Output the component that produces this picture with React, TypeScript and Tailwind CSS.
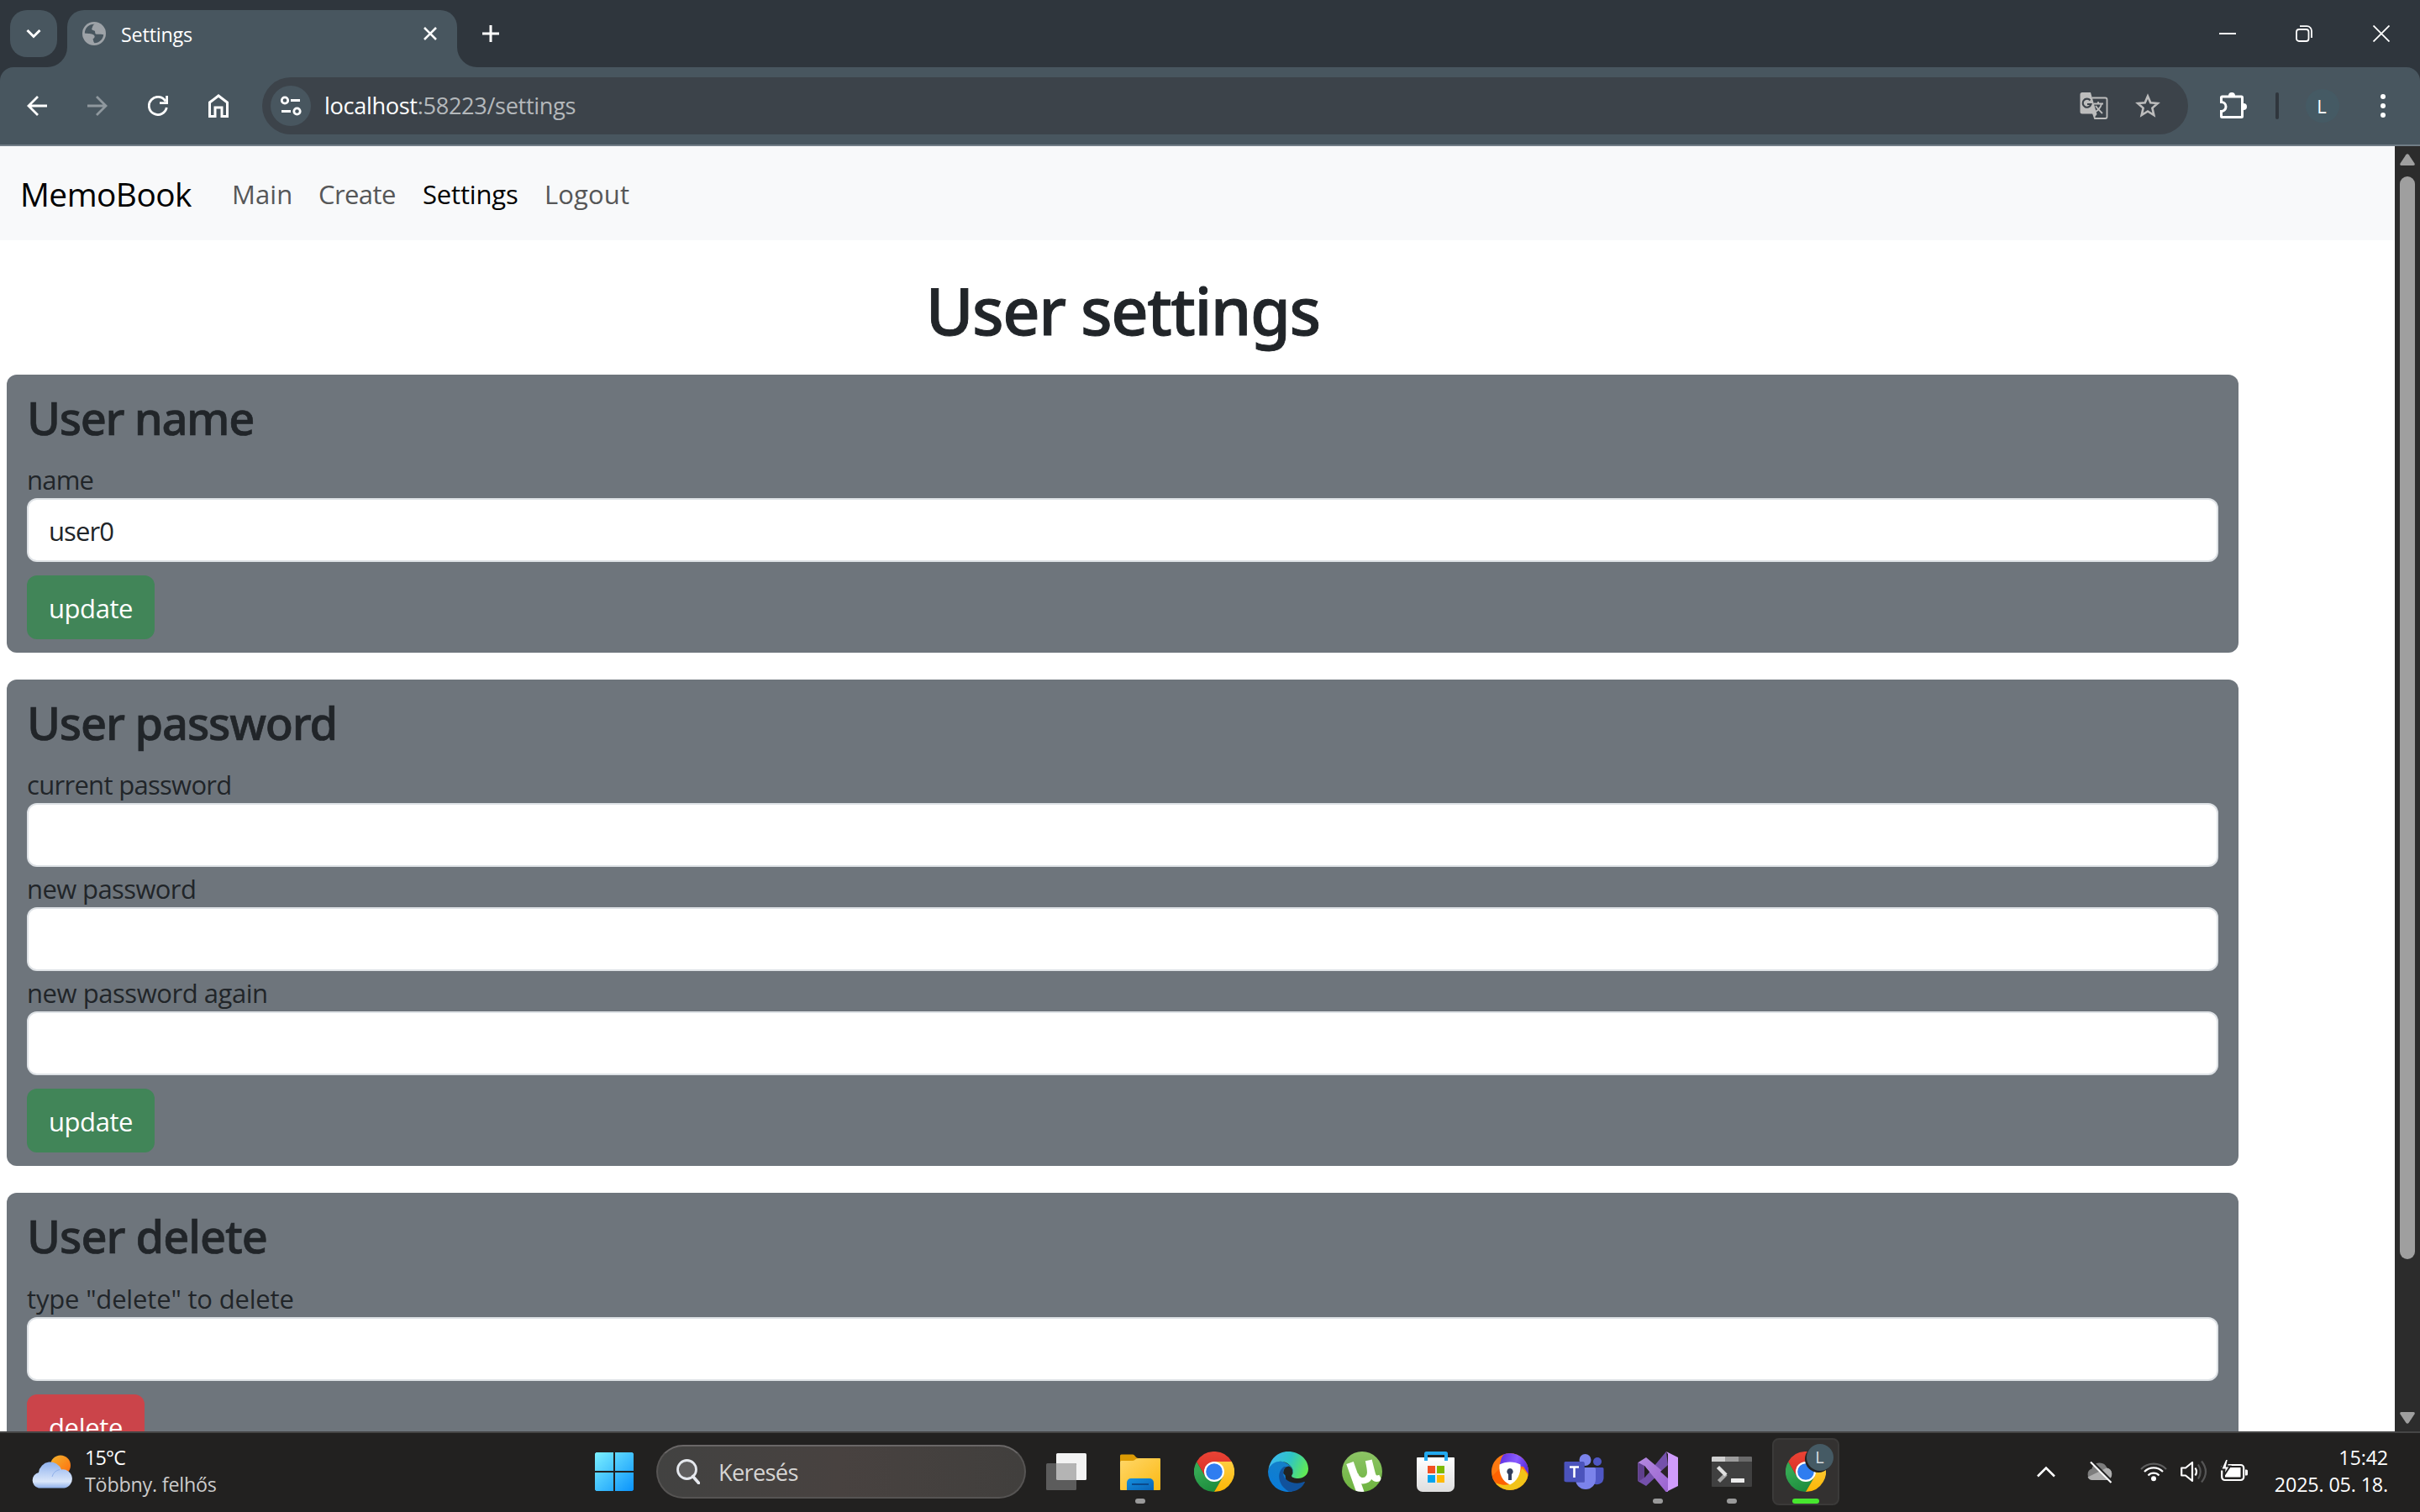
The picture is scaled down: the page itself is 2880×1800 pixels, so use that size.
import React from 'react';

function ChromeLogo() {
  return (
    <svg width="48" height="48" viewBox="0 0 48 48">
      <defs>
        <linearGradient id="cg" x1="0" y1="0" x2="0.5" y2="1">
          <stop offset="0.3" stopColor="#34a853" />
          <stop offset="1" stopColor="#1e8e3e" />
        </linearGradient>
        <linearGradient id="cr" x1="0" y1="0" x2="0" y2="1">
          <stop offset="0" stopColor="#ea4335" />
          <stop offset="1" stopColor="#d93025" />
        </linearGradient>
        <linearGradient id="cy" x1="0.5" y1="0" x2="0.5" y2="1">
          <stop offset="0" stopColor="#ffcd40" />
          <stop offset="1" stopColor="#fbb704" />
        </linearGradient>
      </defs>
      <path d="M24 48A24 24 0 0 1 3.2 12L13.6 30H34.4Z" fill="url(#cg)" />
      <path d="M44.8 12A24 24 0 0 1 24 48L34.4 30L24 12Z" fill="url(#cy)" />
      <path d="M3.2 12A24 24 0 0 1 44.8 12H24L13.6 30Z" fill="url(#cr)" />
      <circle cx="24" cy="24" r="12" fill="#fff" />
      <circle cx="24" cy="24" r="9.8" fill="#2f7df0" />
    </svg>
  );
}

function EdgeLogo() {
  return (
    <svg width="48" height="48" viewBox="0 0 48 48">
      <defs>
        <linearGradient id="e1" x1="0" y1="0.3" x2="1" y2="0.6">
          <stop offset="0" stopColor="#3cb8f5" />
          <stop offset="0.5" stopColor="#2fc5c4" />
          <stop offset="1" stopColor="#62ea52" />
        </linearGradient>
        <linearGradient id="e2" x1="0.6" y1="0" x2="0.2" y2="1">
          <stop offset="0" stopColor="#1580c8" />
          <stop offset="1" stopColor="#087bdc" />
        </linearGradient>
      </defs>
      <path d="M0 24C1 13 12 8 22 14C28 17 30 21 30 25L20 24L22 40L29 47.5A24 24 0 0 1 0 24Z" fill="url(#e2)" />
      <path d="M19 18C10 24 11 40 25 47.8C34 48 41 43 44 36.500C43.500 35.500 42 36.500 39 37.300C28 39 18 34 18 25C18 21 21 18 25 18Z" fill="#11529c" />
      <path d="M28.500 28C24 30 20 29 18.300 26C18 21 21 18 25 17.500C29 19 30.500 24 28.500 28Z" fill="#222423" />
      <path d="M0.500 21C3 8 12 0 24 0C38 0 48 10 48 20.500C48 28 42 32 36 32C30 32 27 30 28.500 28C30.500 25 30 21 28 18.500C21 9 6 9 0.500 21Z" fill="url(#e1)" />
    </svg>
  );
}

function TorrentLogo() {
  return (
    <svg width="48" height="48" viewBox="0 0 48 48">
      <defs>
        <linearGradient id="ut" x1="0" y1="0" x2="0" y2="1">
          <stop offset="0" stopColor="#8cc465" />
          <stop offset="1" stopColor="#6db33f" />
        </linearGradient>
        <clipPath id="utc"><circle cx="24" cy="24" r="24" /></clipPath>
      </defs>
      <circle cx="24" cy="24" r="24" fill="url(#ut)" />
      <g fill="none" stroke="#fff" clipPath="url(#utc)">
        <path d="M9.500 13.500L22.500 50" strokeWidth="9" />
        <path d="M15.500 27C18 35 25 36 29.500 33.500C35 30 34.500 24 31.500 10.500M32 10.500L36 26C37 31 40 34 46 31" strokeWidth="7.500" />
      </g>
    </svg>
  );
}

function StoreLogo() {
  return (
    <svg width="48" height="48" viewBox="0 0 48 48">
      <defs>
        <linearGradient id="st" x1="0" y1="0" x2="0" y2="1">
          <stop offset="0" stopColor="#fff" />
          <stop offset="1" stopColor="#dedede" />
        </linearGradient>
      </defs>
      <path d="M1 8a1 1 0 0 1 1-1H45a1 1 0 0 1 1 1V41a7 7 0 0 1-7 7H8a7 7 0 0 1-7-7Z" fill="url(#st)" />
      <path d="M12 11V2.500A.5.500 0 0 1 12.500 2H35.500A.5.500 0 0 1 36 2.500V11" fill="none" stroke="#22a9ef" strokeWidth="4" />
      <path d="M14 17h9v9h-9z" fill="#f25022" />
      <path d="M25 17h9v9h-9z" fill="#7fba00" />
      <path d="M14 28h9v9h-9z" fill="#00a4ef" />
      <path d="M25 28h9v9h-9z" fill="#ffb900" />
    </svg>
  );
}

function SecureBrowserLogo() {
  return (
    <svg width="48" height="48" viewBox="0 0 48 48">
      <defs>
        <linearGradient id="s1" x1="0" y1="0" x2="1" y2="0.3">
          <stop offset="0" stopColor="#5a2be0" />
          <stop offset="0.6" stopColor="#8a5cff" />
          <stop offset="1" stopColor="#5a2be0" />
        </linearGradient>
        <clipPath id="sbc"><circle cx="24" cy="24" r="22" /></clipPath>
      </defs>
      <circle cx="24" cy="24" r="22" fill="#ff7a10" />
      <g clipPath="url(#sbc)">
        <path d="M12 16C13 8 15 4 20 0H48V30L40 18Z" fill="url(#s1)" />
        <path d="M4 36C14 43 34 36 38 20C44 24 46 30 46 30V48H4Z" fill="#f2c318" />
        <path d="M2 30C8 40 16 41 24 39L12 20Z" fill="#ff6200" />
      </g>
      <path d="M11.500 15.500C19 11.500 29 11.500 36.500 15.500C37.500 27 32 35.500 24 39.500C15 35.500 10.500 27 11.500 15.500Z" fill="#fff" />
      <path d="M24 20a4 4 0 0 1 2 7.300V34h-4V27.300A4 4 0 0 1 24 20Z" fill="#323e5c" />
    </svg>
  );
}

function TeamsLogo() {
  return (
    <svg width="48" height="48" viewBox="0 0 48 48">
      <circle cx="40" cy="12" r="5" fill="#4f57c4" />
      <path d="M34 19H46a1.500 1.500 0 0 1 1.500 1.500V31a8 8 0 0 1-13.500 6Z" fill="#4f57c4" />
      <circle cx="25.500" cy="10" r="7" fill="#7b83eb" />
      <path d="M16 19H36a2 2 0 0 1 2 2V33a12 12 0 0 1-24 0V21Z" fill="#7b83eb" />
      <rect x="2" y="13" width="23" height="24" rx="1.500" fill="#3a3f96" opacity="0.5" />
      <rect x="0.500" y="12" width="24" height="24" rx="1.500" fill="#4b53bc" />
      <path d="M7 18.500H18M12.500 18.500V31" stroke="#fff" strokeWidth="2.600" />
    </svg>
  );
}

function StudioLogo() {
  return (
    <svg width="48" height="48" viewBox="0 0 48 48">
      <defs>
        <linearGradient id="v1" x1="0" y1="0" x2="1" y2="1">
          <stop offset="0" stopColor="#b48ae0" />
          <stop offset="1" stopColor="#9a62d0" />
        </linearGradient>
      </defs>
      <path d="M0.500 13L8 17V31L0.500 35.500Z" fill="#5f3f8c" />
      <path d="M8 31L34 0L36 17L10 41L0.500 35.500Z" fill="#7450ab" />
      <path d="M0.500 13L10 7L36 29V48H33.500L8 17V31L0.500 35Z" fill="url(#v1)" />
      <path d="M0.500 13L8 17V31L0.500 35.500Z" fill="#5f3f8c" />
      <path d="M8 17V31L14 24.500Z" fill="#221f20" />
      <path d="M36 16L27 24L36 32Z" fill="#2a2328" />
      <path d="M34 0L48 7V41L34 48L36 46V3Z" fill="#cf9bfb" />
    </svg>
  );
}

function TerminalLogo() {
  return (
    <svg width="48" height="36" viewBox="0 0 48 36">
      <rect width="48" height="36" rx="1" fill="#404040" />
      <path d="M1 0H16V6H0V1Z" fill="#cfcfcf" />
      <path d="M16 0H32V6H16Z" fill="#9c9c9c" />
      <path d="M32 0H47L48 1V6H32Z" fill="#6a6a6a" />
      <path d="M17 21L8.500 29.500" stroke="#a8a8a8" strokeWidth="4.500" />
      <path d="M7.500 12.500L17 22" stroke="#e2e2e2" strokeWidth="4.500" />
      <rect x="23" y="26" width="16" height="5" rx="0.500" fill="#ececec" />
    </svg>
  );
}

function TaskViewIcon() {
  return (
    <svg width="48" height="48" viewBox="0 0 48 48">
      <rect x="12" y="2" width="36" height="32" rx="1.500" fill="#f3f3f3" />
      <rect x="0" y="14" width="36" height="32" rx="1.500" fill="#5c5c5c" />
      <path d="M12 14H34.500a1.500 1.500 0 0 1 1.500 1.500V34H13.500a1.500 1.500 0 0 1-1.500-1.500Z" fill="#b4b4b4" />
    </svg>
  );
}

function FolderIcon() {
  return (
    <svg width="48" height="48" viewBox="0 0 48 48">
      <defs>
        <linearGradient id="fo" x1="0" y1="0" x2="1" y2="1">
          <stop offset="0" stopColor="#ffd768" />
          <stop offset="1" stopColor="#fcb914" />
        </linearGradient>
        <linearGradient id="fb" x1="0" y1="0" x2="1" y2="1">
          <stop offset="0" stopColor="#1490df" />
          <stop offset="1" stopColor="#0a63b5" />
        </linearGradient>
      </defs>
      <path d="M0 5a1.500 1.500 0 0 1 1.500-1.500H15C18 3.500 18 8 22 8V14H0Z" fill="#dc9b04" />
      <path d="M0 13C0 11.500 1 11 2 11H15C18 11 18 8 22 8H47A1 1 0 0 1 48 9V45a1 1 0 0 1-1 1H1a1 1 0 0 1-1-1Z" fill="url(#fo)" />
      <path d="M8 46V37a5 5 0 0 1 5-5H35a5 5 0 0 1 5 5V46Z" fill="url(#fb)" />
      <path d="M14 39H34" stroke="#0a4a8c" strokeWidth="2" />
    </svg>
  );
}

function Slot({ children, dot = false }: { children: React.ReactNode; dot?: boolean }) {
  return (
    <div className="relative flex h-20 w-[88px] items-center justify-center">
      {children}
      {dot && <span className="absolute bottom-[2px] left-[38px] h-1.5 w-3 rounded-full bg-[#9a9a9a]" />}
    </div>
  );
}

function TabStrip() {
  return (
    <div className="flex h-20 bg-[#2f363d] pt-3">
      <div className="ml-3 flex size-14 items-center justify-center rounded-[20px] bg-[#48565f]">
        <svg width="18" height="12" viewBox="0 0 18 12" fill="none" stroke="#fff" strokeWidth="3">
          <path d="M1.500 2L9 9.500L16.500 2" />
        </svg>
      </div>
      <div className="relative ml-3 h-[68px] w-[464px] rounded-t-[20px] bg-[#48565f]">
        <svg className="absolute bottom-0 -left-6" width="24" height="24"><path d="M24 0V24H0A24 24 0 0 0 24 0Z" fill="#48565f" /></svg>
        <svg className="absolute -right-6 bottom-0" width="24" height="24"><path d="M0 0V24H24A24 24 0 0 1 0 0Z" fill="#48565f" /></svg>
        <div className="flex h-14 items-center pl-[18px]">
          <svg width="28" height="28" viewBox="0 0 28 28">
            <circle cx="14" cy="14" r="14" fill="#9da2a7" />
            <path d="M14.500 2.700C12 4 12.500 6 11.500 7.500C10.500 9 12 10 14 10.500C16 11 14.500 13.500 16 14.500C17.500 15.500 22.500 14 25.200 15.500C24.500 21 20 25 14.500 25.300C13 24 13.500 22.500 12.500 20.500C15 19 15.500 17 13.500 15.500C11 13.500 6 14.500 2.800 13.500C3 7 8 2.500 14.500 2.700Z" fill="#48565f" />
          </svg>
          <span className="ml-[18px] w-[360px] pt-[2px] text-[23.3px] tracking-[-0.0073em] text-white">Settings</span>
          <svg width="16" height="16" viewBox="0 0 16 16" stroke="#fff" strokeWidth="2.600"><path d="M1 1L15 15M15 1L1 15" /></svg>
        </div>
      </div>
      <div className="ml-[30px] flex h-14 items-center">
        <svg width="20" height="20" viewBox="0 0 20 20" stroke="#fff" strokeWidth="3"><path d="M10 0V20M0 10H20" /></svg>
      </div>
      <div className="mr-9 ml-auto flex h-14 items-center">
        <svg width="20" height="20" viewBox="0 0 20 20" stroke="#fff" strokeWidth="2"><path d="M0 10H20" /></svg>
        <svg className="ml-[71px]" width="20" height="20" viewBox="0 0 20 20" fill="none" stroke="#fff" strokeWidth="1.800">
          <rect x="1" y="5" width="14.500" height="14" rx="3" />
          <path d="M5 1.200H13.500A5.500 5.500 0 0 1 19 6.700V15" />
        </svg>
        <svg className="ml-[72px]" width="20" height="20" viewBox="0 0 20 20" stroke="#fff" strokeWidth="1.800"><path d="M0.500 0.500L19.500 19.500M19.500 0.500L0.500 19.500" /></svg>
      </div>
    </div>
  );
}

function Toolbar() {
  return (
    <div className="bg-[#2f363d]">
      <div className="flex h-[94px] items-center rounded-t-2xl border-b-2 border-[#717d86] bg-[#48565f] pl-8">
        <svg width="24" height="24" viewBox="0 0 24 24" fill="none" stroke="#fff" strokeWidth="2.800"><path d="M24 12H2M13 1L2 12L13 23" /></svg>
        <svg className="ml-12" width="24" height="24" viewBox="0 0 24 24" fill="none" stroke="#8f989e" strokeWidth="2.800"><path d="M0 12H22M11 1L22 12L11 23" /></svg>
        <svg className="ml-12" width="24" height="24" viewBox="0 0 24 24" fill="none" stroke="#fff" strokeWidth="2.800">
          <path d="M22.300 14A10.600 10.600 0 1 1 21 6.500" />
          <path d="M22.600 0V8.600H14" />
        </svg>
        <svg className="ml-12" width="24" height="28" viewBox="0 0 24 28" fill="none" stroke="#fff" strokeWidth="3"><path d="M1.500 10L12 2L22.500 10V26.500H16V16H8V26.500H1.500Z" /></svg>
        <div className="ml-10 flex h-[68px] w-[2292px] items-center rounded-full bg-[#3c434a] pl-[10px]">
          <div className="flex size-12 items-center justify-center rounded-full bg-[#48565f]">
            <svg width="26" height="24" viewBox="0 0 26 24" fill="none" stroke="#fff" strokeWidth="2.800">
              <circle cx="6" cy="5.500" r="3.700" /><path d="M13 5.500H24M2 18.500H13" /><circle cx="20.500" cy="18.500" r="3.700" />
            </svg>
          </div>
          <span className="ml-4 text-[27.2px] tracking-[-0.013em] text-[#b4b8bb]"><span className="text-white">localhost</span>:58223/settings</span>
          <svg className="mr-[31px] ml-auto" width="34" height="34" viewBox="0 0 34 34">
            <path d="M15 7.500H30.500A2 2 0 0 1 32.500 9.500V30A2 2 0 0 1 30.500 32H18L16 26" fill="none" stroke="#bdbdbd" strokeWidth="1.800" />
            <path d="M3 1H13L20.500 27L17.500 31L15.500 26.500H3A2.500 2.500 0 0 1 0.500 24V3.500A2.500 2.500 0 0 1 3 1Z" fill="#bdbdbd" />
            <path d="M12.500 10.500A5 5 0 1 0 13.500 15H9" fill="none" stroke="#3c434a" strokeWidth="2.200" />
            <path d="M17 14.500H28M22 12V14.500M26 14.500C25 19 22 22 19 24M19 17C21 20 24 23 27 26" fill="none" stroke="#bdbdbd" strokeWidth="1.800" />
          </svg>
          <svg className="mr-8" width="32" height="30" viewBox="0 0 32 30"><path d="M16 3.500L19.300 11.200L27.800 12L21.400 17.600L23.300 26L16 21.500L8.700 26L10.600 17.600L4.200 12L12.700 11.200Z" fill="none" stroke="#bdbdbd" strokeWidth="2.600" /></svg>
        </div>
        <svg className="ml-[38px]" width="32" height="34" viewBox="0 0 32 34" fill="none">
          <path d="M10 5A4 4 0 0 1 18 5ZM28 14A4 4 0 0 1 28 22Z" fill="#fff" />
          <path d="M3.500 6H25.500A1 1 0 0 1 26.500 7V29.500A1 1 0 0 1 25.500 30.500H2.500A1 1 0 0 1 1.500 29.500V23.500A5.500 5.500 0 0 0 1.500 12.500V7A1 1 0 0 1 2.500 6Z" stroke="#fff" strokeWidth="3" />
        </svg>
        <div className="ml-[34px] h-8 w-1 rounded-full bg-[#2f363d]" />
        <div className="ml-8 flex size-10 items-center justify-center rounded-full bg-[#455a64] pr-[2px] text-[22px] text-white">L</div>
        <svg className="ml-[49px]" width="6" height="28" viewBox="0 0 6 28" fill="#fff"><circle cx="3" cy="3" r="3" /><circle cx="3" cy="14" r="3" /><circle cx="3" cy="25" r="3" /></svg>
      </div>
    </div>
  );
}

function Field({ label, value, track }: { label: string; value?: string; track: string }) {
  return (
    <label className="block">
      <span className={`block h-12 pt-[2px] text-[31px] leading-[48px] text-[#212529] ${track}`}>{label}</span>
      <input
        readOnly
        defaultValue={value}
        className="block h-[76px] w-full rounded-xl border-2 border-[#dee2e6] bg-white px-6 pt-[2px] text-[31px] tracking-[-0.03em] text-[#212529] outline-none"
      />
    </label>
  );
}

function Card({ title, track, children }: { title: string; track: string; children: React.ReactNode }) {
  return (
    <section className="mb-8 rounded-xl bg-[#6e757c] px-6 py-4">
      <h3 className={`mb-4 h-[67.2px] pt-[2px] font-['Noto_Sans'] text-[54.3px] leading-[67.2px] font-medium text-[#212529] [-webkit-text-stroke:0.7px_#212529] ${track}`}>{title}</h3>
      {children}
    </section>
  );
}

function Page() {
  return (
    <div className="flex h-[1530px] overflow-hidden bg-white">
      <div className="w-[2850px]">
        <nav className="flex h-28 items-center bg-[#f8f9fa] pl-6 text-[31px] text-[#565758]">
          <span className="w-[252px] pt-[2px] text-[38.8px] tracking-[-0.0135em] text-black">MemoBook</span>
          <a className="w-[103px] pt-[2px] tracking-[0.003em]">Main</a>
          <a className="w-[124px] pt-[2px] tracking-[-0.0191em]">Create</a>
          <a className="w-[145px] pt-[2px] tracking-[-0.0059em] text-black">Settings</a>
          <a className="pt-[2px] tracking-[0.0038em]">Logout</a>
        </nav>
        <main className="ml-2 w-[2656px] pt-8">
          <h1 className="mb-8 h-24 pt-[3px] text-center font-['Noto_Sans'] text-[77.6px] leading-[96px] font-medium tracking-[-0.0203em] text-[#212529] [-webkit-text-stroke:0.9px_#212529]">User settings</h1>
          <Card title="User name" track="tracking-[-0.0255em]">
            <Field label="name" value="user0" track="tracking-[-0.025em]" />
            <button className="mt-4 block h-[76px] w-[152px] rounded-xl bg-[#418558] pt-[2px] text-[31px] tracking-[-0.014em] text-white">update</button>
          </Card>
          <Card title="User password" track="tracking-[-0.0225em]">
            <Field label="current password" track="tracking-[-0.0225em]" />
            <Field label="new password" track="tracking-[-0.0195em]" />
            <Field label="new password again" track="tracking-[-0.0145em]" />
            <button className="mt-4 block h-[76px] w-[152px] rounded-xl bg-[#418558] pt-[2px] text-[31px] tracking-[-0.014em] text-white">update</button>
          </Card>
          <Card title="User delete" track="tracking-[-0.0190em]">
            <Field label={'type "delete" to delete'} track="tracking-[-0.0055em]" />
            <button className="mt-4 block h-[76px] w-[140px] rounded-xl bg-[#cb444a] pt-1 text-[31px] tracking-[-0.0111em] text-white">delete</button>
          </Card>
        </main>
      </div>
      <div className="flex w-[30px] flex-col items-center bg-[#2c2c2c] pt-[9px]">
        <svg width="18" height="14" viewBox="0 0 18 14"><path d="M7.300 1.200Q9-.8 10.700 1.200L17.500 11.500Q18.500 14 16 14H2Q-.5 14 .5 11.500Z" fill="#9f9f9f" /></svg>
        <div className="mt-[13px] h-[1289px] w-[18px] rounded-full bg-[#9f9f9f]" />
        <svg className="mt-[182px]" width="18" height="14" viewBox="0 0 18 14"><path d="M7.300 12.800Q9 14.800 10.700 12.800L17.500 2.500Q18.500 0 16 0H2Q-.5 0 .5 2.500Z" fill="#9f9f9f" /></svg>
      </div>
    </div>
  );
}

function Tray() {
  return (
    <div className="flex h-20 items-center">
      <svg width="22" height="14" viewBox="0 0 22 14" fill="none" stroke="#fff" strokeWidth="2.500"><path d="M1 12.500L11 2.500L21 12.500" /></svg>
      <svg className="ml-[37px]" width="32" height="28" viewBox="0 0 32 28">
        <path d="M7 24A7 7 0 0 1 6.500 10.500A9.500 9.500 0 0 1 24.500 9.500A7.500 7.500 0 0 1 25 24Z" fill="#7d7d7d" />
        <path d="M1.500 20.500L19 12L24 9.500A7.500 7.500 0 0 1 25 24H7Q3.500 24 1.500 20.500Z" fill="#aeaeae" />
        <path d="M6.500 1.500L30.500 25.500" stroke="#222" strokeWidth="2.500" />
        <path d="M5 2.500L29.500 27" stroke="#fff" strokeWidth="2.200" />
      </svg>
      <svg className="mt-[-2px] ml-8" width="32" height="26" viewBox="0 0 32 26" fill="none" strokeWidth="2.200">
        <path d="M1 11A21 21 0 0 1 31 11" stroke="#5e5e5e" />
        <path d="M5 14A15.500 15.500 0 0 1 27 14" stroke="#fff" />
        <path d="M9.500 18.500A9 9 0 0 1 22.500 18.500" stroke="#fff" />
        <circle cx="16" cy="22.300" r="3" fill="#fff" />
      </svg>
      <svg className="ml-4" width="32" height="28" viewBox="0 0 32 28" fill="none" strokeWidth="2.200" strokeLinejoin="round">
        <path d="M1.200 9.500H6L14 3V25L6 18.500H1.200Z" stroke="#fff" />
        <path d="M17.500 9.500Q20.500 14 17.500 18.500" stroke="#fff" />
        <path d="M21 5.500Q26.500 14 21 22.500M25 1.500Q35 14 25 26.500" stroke="#555" />
      </svg>
      <svg className="mt-[-5px] ml-4" width="32" height="28" viewBox="0 0 32 28" fill="none">
        <rect x="1.200" y="8" width="26" height="18" rx="3.500" stroke="#fff" strokeWidth="2.200" />
        <path d="M5 22.500V18L11 11H23.500V22.500Z" fill="#fff" />
        <path d="M29 13.500H30.500Q32 13.500 32 15V19Q32 20.500 30.500 20.500H29Z" fill="#fff" />
        <path d="M5.500 1L0 13.500H4.500L3.500 21L11 9.500H7L9 1Z" fill="#fff" stroke="#222" strokeWidth="2" />
      </svg>
      <div className="w-[167px] pb-[2px] text-right text-[23.3px] leading-8 tracking-[-0.0062em] text-white">
        <div>15:42</div>
        <div>2025. 05. 18.</div>
      </div>
    </div>
  );
}

function Taskbar() {
  return (
    <div className="h-24 border-t-2 border-[#454545] bg-[#222120] pt-[6px]">
      <div className="flex h-20 items-center">
        <div className="flex w-[687px] items-center pl-[37px]">
          <svg width="50" height="40" viewBox="0 0 50 40">
            <defs>
              <linearGradient id="sun" x1="0" y1="0" x2="1" y2="1">
                <stop offset="0" stopColor="#f2b52e" />
                <stop offset="1" stopColor="#ff6a0c" />
              </linearGradient>
              <linearGradient id="cl" x1="0" y1="0" x2="0" y2="1">
                <stop offset="0" stopColor="#8fb2ef" />
                <stop offset="0.75" stopColor="#dbe7fa" />
                <stop offset="1" stopColor="#8fb0ea" />
              </linearGradient>
            </defs>
            <circle cx="35" cy="12.500" r="12" fill="url(#sun)" />
            <path d="M9 39.500A9.500 9.500 0 0 1 9 21A14 14 0 0 1 36 17.500A11 11 0 0 1 39.500 39.500Z" fill="url(#cl)" />
            <path d="M25 26A12 12 0 0 1 34 17.500" stroke="#8fb0ea" strokeWidth="1" fill="none" />
          </svg>
          <div className="ml-[14px] pb-[2px] text-[23.3px] leading-8 text-white">
            <div className="tracking-[-0.035em]">15°C</div>
            <div className="tracking-[-0.0090em] text-[#cbcbcb]">Többny. felhős</div>
          </div>
        </div>
        <div className="flex w-[94px] pl-[21px]">
          <svg width="46" height="46" viewBox="0 0 46 46">
            <defs>
              <linearGradient id="win" gradientUnits="userSpaceOnUse" x1="0" y1="0" x2="46" y2="46">
                <stop offset="0" stopColor="#7bf0ff" />
                <stop offset="1" stopColor="#0a93fb" />
              </linearGradient>
            </defs>
            <path d="M1.500 0H22V22H0V1.500ZM24 0H44.500L46 1.500V22H24ZM0 24H22V46H1.500L0 44.500ZM24 24H46V44.500L44.500 46H24Z" fill="url(#win)" />
          </svg>
        </div>
        <div className="mr-1 flex h-16 w-[440px] items-center rounded-full border-2 border-[#565453] border-t-[#6a6767] bg-linear-to-r from-[#424241] via-[#484240] to-[#413f3d] pl-[22px]">
          <svg width="28" height="30" viewBox="0 0 28 30" fill="none" stroke="#e6e9ee">
            <circle cx="12.500" cy="12.500" r="11" strokeWidth="2.800" fill="#5f5e5e" />
            <path d="M19.500 20.500L26.500 28.500" strokeWidth="3.600" strokeLinecap="round" />
          </svg>
          <span className="ml-[22px] pt-[2px] text-[27.2px] tracking-[-0.025em] text-[#d6d5d4]">Keresés</span>
        </div>
        <Slot><TaskViewIcon /></Slot>
        <Slot dot><FolderIcon /></Slot>
        <Slot><ChromeLogo /></Slot>
        <Slot><EdgeLogo /></Slot>
        <Slot><TorrentLogo /></Slot>
        <Slot><StoreLogo /></Slot>
        <Slot><SecureBrowserLogo /></Slot>
        <Slot><TeamsLogo /></Slot>
        <Slot dot><StudioLogo /></Slot>
        <Slot dot><TerminalLogo /></Slot>
        <div className="relative ml-1 flex size-20 items-center justify-center rounded-lg border-2 border-[#3b3a39] bg-[#333130]">
          <ChromeLogo />
          <span className="absolute top-[5px] right-[5px] flex size-8 items-center justify-center rounded-full bg-[#455a64] pr-px text-[20px] text-[#d8dde0] shadow-[-2px_2px_0_#222]">L</span>
          <span className="absolute bottom-0 left-[22px] h-1.5 w-8 rounded-full bg-[#47e62f]" />
        </div>
        <div className="ml-[235px]"><Tray /></div>
      </div>
    </div>
  );
}

export default function App() {
  return (
    <div className="h-[1800px] w-[2880px] overflow-hidden font-['Open_Sans','Noto_Sans',sans-serif]">
      <TabStrip />
      <Toolbar />
      <Page />
      <Taskbar />
    </div>
  );
}
